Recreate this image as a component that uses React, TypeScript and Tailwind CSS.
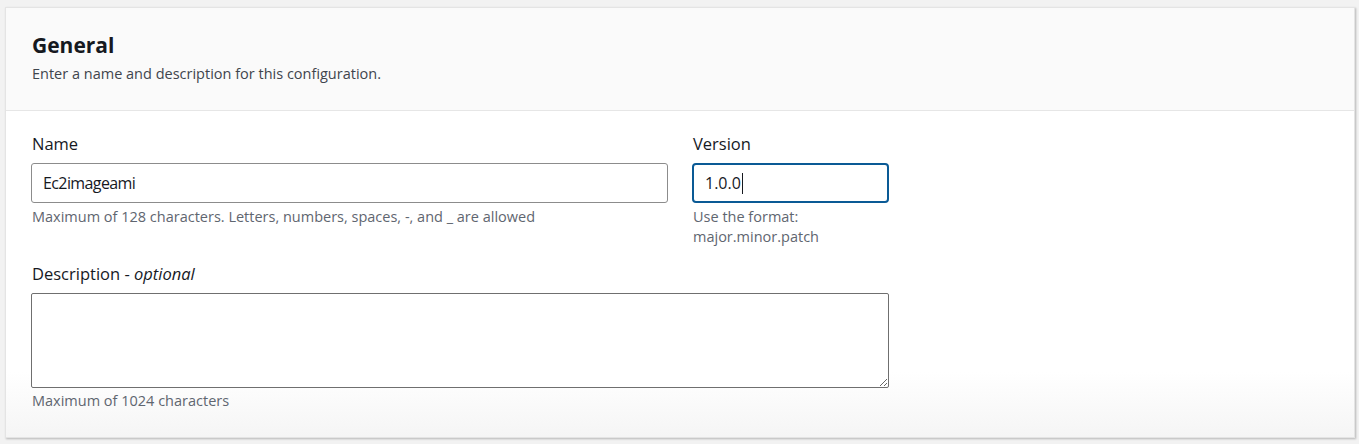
import React from "react";

export default function App() {
  const font = { fontFamily: '"Open Sans", "Noto Sans", Arial, sans-serif' };
  return (
    <div className="w-[1359px] h-[444px] bg-[#f2f2f2] pt-[7px] pl-[5px]" style={font}>
      <div className="w-[1350px] h-[431px] flex flex-col bg-white border border-[#e4e4e4] shadow-[1px_1px_2px_rgba(0,0,0,0.25)]">
        <div className="bg-[#fafafa] border-b border-[#e6e6e6] pl-[26px] pt-[24px] pb-[26px]">
          <div className="text-[21px] leading-[26px] font-bold text-[#16191f]">General</div>
          <div className="mt-[6px] text-[14.5px] leading-[20px] text-[#3f454d]">
            Enter a name and description for this configuration.
          </div>
        </div>
        <div className="flex-1 pl-[25px] pt-[21px] bg-gradient-to-b from-white from-[80%] to-[#f5f5f5]">
          <div className="flex gap-[24px]">
            <div className="w-[637px] flex flex-col">
              <div className="text-[16.5px] leading-[24px] text-[#16191f] pl-[1px]">Name</div>
              <div className="mt-[7px] h-[40px] border border-[#8c8c8c] rounded-[3px] flex items-center pl-[11px] text-[16px] tracking-[-0.6px] text-[#16191f]">
                Ec2imageami
              </div>
              <div className="mt-[4px] text-[14.5px] leading-[20px] text-[#5f6670] pl-[1px]">
                Maximum of 128 characters. Letters, numbers, spaces, -, and _ are allowed
              </div>
            </div>
            <div className="w-[197px] flex flex-col">
              <div className="text-[16.5px] leading-[24px] text-[#16191f] pl-[1px]">Version</div>
              <div className="mt-[7px] h-[40px] border-2 border-[#0a5a95] rounded-[4px] flex items-center pl-[11px] text-[16px] text-[#16191f]">
                <span>1.0.0</span>
                <span className="inline-block w-[1px] h-[21px] ml-[1px] bg-[#16191f]" />
              </div>
              <div className="mt-[4px] text-[14.5px] leading-[20px] text-[#5f6670] pl-[1px]">
                Use the format:
                <br />
                major.minor.patch
              </div>
            </div>
          </div>
          <div className="mt-[15px] w-[858px] flex flex-col">
            <div className="text-[16.5px] leading-[24px] text-[#16191f] pl-[1px]">
              Description - <span className="italic">optional</span>
            </div>
            <textarea
              className="mt-[7px] h-[95px] w-full border border-[#6f6f6f] rounded-[2px] bg-white outline-none resize-y"
              defaultValue=""
            />
            <div className="mt-[3px] text-[14.5px] leading-[20px] text-[#5f6670] pl-[1px]">
              Maximum of 1024 characters
            </div>
          </div>
        </div>
      </div>
    </div>
  );
}
